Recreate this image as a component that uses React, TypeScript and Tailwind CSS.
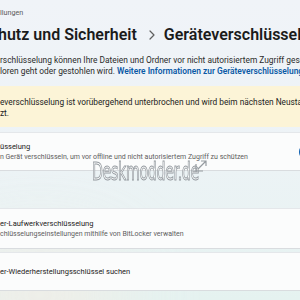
import React from 'react';

const font = { fontFamily: 'Roboto, "Noto Sans", "Liberation Sans", sans-serif' };

function Card({
  title,
  subtitle,
  height,
  toggle,
}: {
  title: string;
  subtitle?: string;
  height: string;
  toggle?: boolean;
}) {
  return (
    <div
      className={`-ml-[10px] flex w-[360px] items-center rounded-[4px] border border-[#e4e7ea] border-b-[#d9dcdf] bg-[#fbfcfc] pl-[9px] pr-[16px] ${height}`}
    >
      <div className="flex flex-1 flex-col whitespace-nowrap">
        <span className="text-[7.5px] leading-[11px] text-[#1b1b1b]">{title}</span>
        {subtitle && (
          <span className="text-[7px] leading-[10px] text-[#5d5d5d]">{subtitle}</span>
        )}
      </div>
      {toggle && <div className="h-[16px] w-[34px] rounded-full bg-[#0a5eb0]" />}
    </div>
  );
}

export default function App() {
  return (
    <div
      className="relative h-[300px] w-[300px] overflow-hidden bg-[linear-gradient(180deg,#f0f3f8_0%,#edf3f6_50%,#e5f2f0_100%)]"
      style={font}
    >
      <div className="pointer-events-none absolute -bottom-[40px] -left-[40px] h-[90px] w-[160px] rounded-full bg-[#f6ebe2] opacity-70 blur-2xl" />

      <div className="relative flex flex-col pt-[7px]">
        <div className="h-[12px] text-[7.2px] leading-[12px] text-[#5b5b5b]">llungen</div>

        <div className="mt-[4px] flex h-[24px] items-center whitespace-nowrap text-[16px] font-semibold leading-[24px] text-[#1b1b1b]">
          <span className="-ml-[2px]">hutz und Sicherheit</span>
          <svg className="ml-[12px] mr-[9px] h-[10px] w-[6px] shrink-0" viewBox="0 0 6 10" fill="none">
            <path d="M1 1l4 4-4 4" stroke="#5f5f5f" strokeWidth="1.2" strokeLinecap="round" strokeLinejoin="round" />
          </svg>
          <span>Geräteverschlüsselung</span>
        </div>

        <div className="mt-[8px] flex flex-col whitespace-nowrap text-[8.4px] leading-[11px] text-[#2b2b2b]">
          <span>rschlüsselung können Ihre Dateien und Ordner vor nicht autorisiertem Zugriff geschützt werden</span>
          <span>
            loren geht oder gestohlen wird.{' '}
            <span className="font-semibold text-[#0b5aa6]">Weitere Informationen zur Geräteverschlüsselung</span>
          </span>
        </div>

        <div className="-ml-[10px] mt-[9px] flex w-[340px] flex-col whitespace-nowrap rounded-[4px] bg-[#fcf4d7] pb-[8px] pl-[10px] pt-[11px] text-[8.3px] leading-[11px] text-[#1b1b1b]">
          <span>everschlüsselung ist vorübergehend unterbrochen und wird beim nächsten Neustart fortgesetzt</span>
          <span>zt.</span>
        </div>

        <div className="mt-[5px] flex flex-col">
          <Card
            height="h-[39px]"
            title="üsselung"
            subtitle="n Gerät verschlüsseln, um vor offline und nicht autorisiertem Zugriff zu schützen"
            toggle
          />
          <div className="mt-[37px]">
            <Card
              height="h-[41px]"
              title="er-Laufwerkverschlüsselung"
              subtitle="chlüsselungseinstellungen mithilfe von BitLocker verwalten"
            />
          </div>
          <div className="mt-[3px]">
            <Card height="h-[39px]" title="er-Wiederherstellungsschlüssel suchen" />
          </div>
        </div>
      </div>

      <div className="pointer-events-none absolute left-[92px] top-[159px] flex items-start">
        <span
          className="origin-left scale-x-[0.63] text-[25px] leading-[25px] tracking-[-0.5px] text-[#ffffffc0] [-webkit-text-stroke:1px_#959ba0]"
          style={{ fontFamily: '"DejaVu Sans Condensed", "DejaVu Sans", sans-serif' }}
        >
          Deskmodder.de
        </span>
      </div>
      <svg className="pointer-events-none absolute left-[195px] top-[160px] h-[12px] w-[12px]" viewBox="0 0 12 12" fill="none">
        <path d="M1 4v7h7" stroke="#959ba0" strokeWidth="1.2" />
        <path d="M3 9l8-8M6 1h5v5" stroke="#959ba0" strokeWidth="1.2" />
      </svg>
    </div>
  );
}
